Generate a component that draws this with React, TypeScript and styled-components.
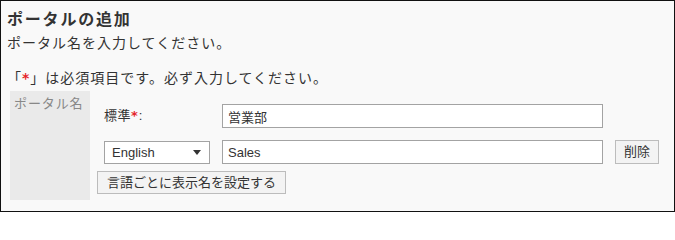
import styled, { createGlobalStyle } from 'styled-components';

const GlobalStyle = createGlobalStyle`
  html, body {
    margin: 0;
    padding: 0;
    background: #ffffff;
  }
  body {
    font-family: "Liberation Sans", "Noto Sans CJK JP", sans-serif;
    color: #333333;
  }
`;

const App = () => {
  return (
    <>
      <GlobalStyle />
      <Frame>
        <Title>ポータルの追加</Title>
        <Lead>ポータル名を入力してください。</Lead>
        <Note>
          「<Required>*</Required>」は必須項目です。必ず入力してください。
        </Note>
        <FieldTable>
          <FieldLabel>ポータル名</FieldLabel>
          <FieldBody>
            <FieldRow>
              <RowLabel>
                標準<Required>*</Required>:
              </RowLabel>
              <TextInput type="text" defaultValue="営業部" readOnly />
            </FieldRow>
            <FieldRow $gap={12}>
              <SelectBox>
                <span>English</span>
                <svg width="8" height="5" viewBox="0 0 8 5">
                  <path d="M0 0h8L4 5z" fill="#333" />
                </svg>
              </SelectBox>
              <TextInput type="text" defaultValue="Sales" readOnly />
              <Button $side={12}>削除</Button>
            </FieldRow>
            <ActionButton>言語ごとに表示名を設定する</ActionButton>
          </FieldBody>
        </FieldTable>
      </Frame>
    </>
  );
};

const Frame = styled.div`
  box-sizing: border-box;
  width: 675px;
  height: 212px;
  border: 1px solid #111111;
  background: #f9f9f9;
  padding: 9px 6px 0 6px;
  display: flex;
  flex-direction: column;
  align-items: flex-start;
`;

const Title = styled.h2`
  margin: 0;
  font-size: 16px;
  line-height: 20px;
  font-weight: bold;
  letter-spacing: 1.8px;
  color: #333333;
`;

const Lead = styled.p`
  margin: 4px 0 0;
  font-size: 14px;
  line-height: 18px;
  letter-spacing: 1px;
`;

const Note = styled(Lead)`
  margin-top: 17px;
`;

const Required = styled.span`
  color: #e5242b;
  font-family: "DejaVu Sans", sans-serif;
  font-weight: bold;
  letter-spacing: 1px;
`;

const FieldTable = styled.div`
  display: flex;
  margin: 4px 0 0 3px;
`;

const FieldLabel = styled.div`
  width: 80px;
  box-sizing: border-box;
  background: #eaeaea;
  padding: 4px 0 0 4px;
  font-size: 13px;
  line-height: 18px;
  letter-spacing: 0.9px;
  color: #888888;
`;

const FieldBody = styled.div`
  display: flex;
  flex-direction: column;
  align-items: flex-start;
  padding: 13px 0 6px 7px;
`;

const FieldRow = styled.div<{ $gap?: number }>`
  display: flex;
  align-items: center;
  height: 24px;
  padding-left: 7px;
  margin-top: ${(props) => props.$gap ?? 0}px;
`;

const RowLabel = styled.div`
  width: 118px;
  font-size: 13px;
  line-height: 18px;
  letter-spacing: 0.5px;
`;

const TextInput = styled.input`
  box-sizing: border-box;
  width: 381px;
  height: 24px;
  margin: 0;
  padding: 0 5px;
  border: 1px solid #a3a3a3;
  background: #ffffff;
  font-family: "Liberation Sans", "Noto Sans CJK JP", sans-serif;
  font-size: 13px;
  color: #333333;
  outline: none;
`;

const SelectBox = styled.div`
  box-sizing: border-box;
  width: 106px;
  height: 23px;
  margin-right: 12px;
  padding: 0 8px 0 7px;
  border: 1px solid #a3a3a3;
  background: #ffffff;
  display: flex;
  align-items: center;
  justify-content: space-between;
  font-size: 13px;
  color: #333333;
`;

const Button = styled.button<{ $side?: number }>`
  box-sizing: border-box;
  height: 24px;
  margin: 0 0 0 ${(props) => props.$side ?? 0}px;
  padding: 0 8px;
  border: 1px solid #bcbcbc;
  border-radius: 0;
  background: #f3f3f3;
  font-family: "Liberation Sans", "Noto Sans CJK JP", sans-serif;
  font-size: 13px;
  line-height: 18px;
  color: #333333;
`;

const ActionButton = styled(Button)`
  height: 23px;
  margin-top: 7px;
  padding: 0 9px;
`;

export default App;
